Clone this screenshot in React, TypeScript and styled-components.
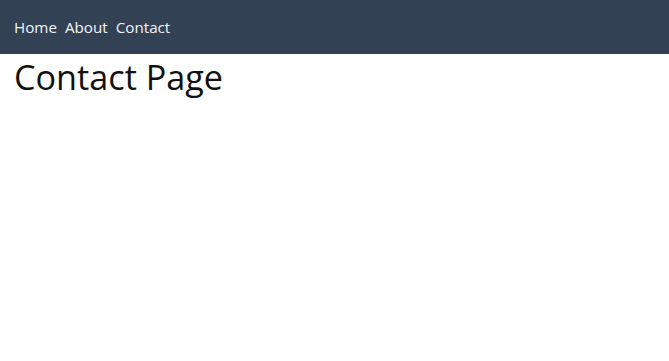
import { createGlobalStyle, styled } from 'styled-components';

const GlobalStyle = createGlobalStyle`
    body {
        margin: 0;
        background: #ffffff;
        font-family: 'Open Sans', 'Noto Sans', sans-serif;
    }
`;

export default function App() {
    return (
        <div>
            <GlobalStyle />
            <NavBar>
                <NavLink href="#">Home</NavLink>
                <NavLink href="#">About</NavLink>
                <NavLink href="#">Contact</NavLink>
            </NavBar>
            <Title>Contact Page</Title>
        </div>
    );
}

const NavBar = styled.nav`
    display: flex;
    align-items: center;
    gap: 8px;
    height: 54px;
    padding: 0 14px;
    background: #334155;
`;

const NavLink = styled.a`
    color: #f1f5f9;
    font-size: 15.2px;
    text-decoration: none;
`;

const Title = styled.h1`
    margin: 0;
    padding: 0 14px;
    color: #111111;
    font-size: 34.2px;
    font-weight: 400;
    line-height: 46px;
`;
